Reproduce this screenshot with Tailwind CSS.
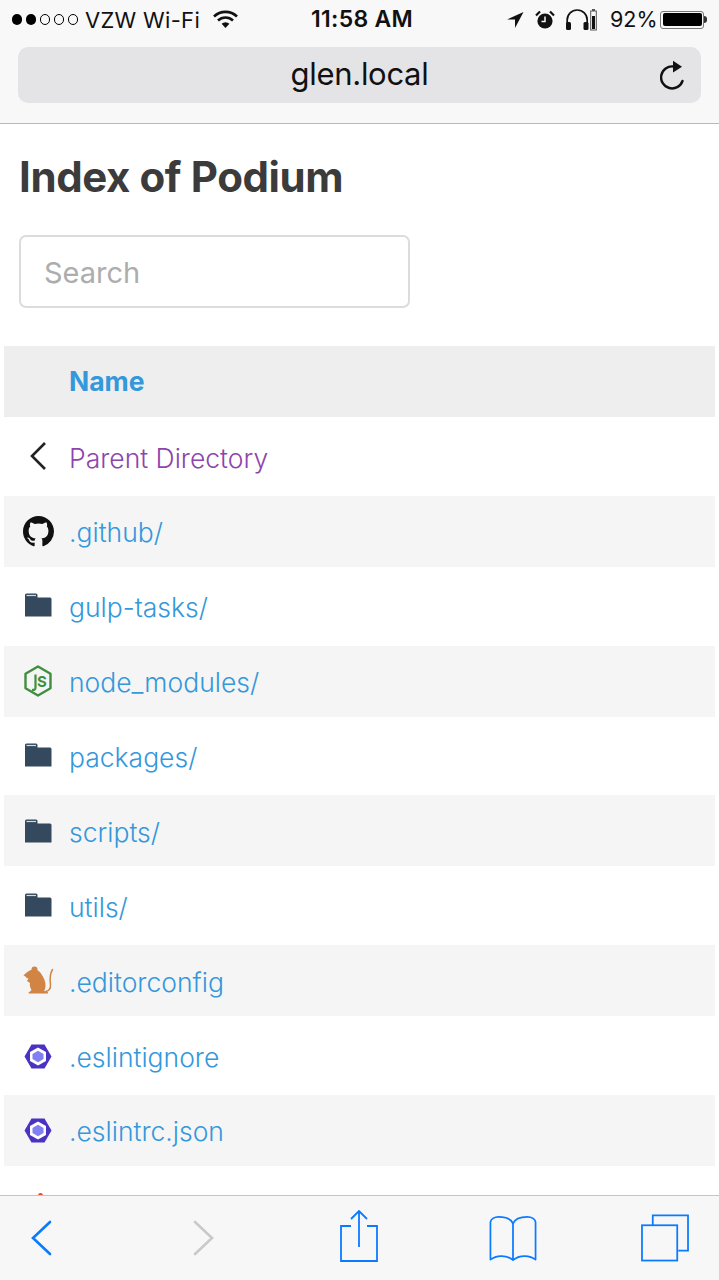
<!DOCTYPE html>
<html lang="en">
<head>
  <meta charset="UTF-8" />
  <meta name="viewport" content="width=device-width, initial-scale=1" />
  <title>Index of Podium</title>
  <script src="https://cdn.jsdelivr.net/npm/@tailwindcss/browser@4"></script>
</head>
<body class="bg-white font-['Inter','Liberation_Sans',sans-serif] overflow-hidden">
<div class="w-[719px] h-[1280px] flex flex-col overflow-hidden">

  <!-- safari top chrome -->
  <header class="h-[124px] shrink-0 bg-[#f8f8f8] border-b border-[#b9b9b9]">
    <div class="h-[39px] flex items-center text-[#111] text-[22px] leading-none">
      <div class="flex items-center gap-[3.5px] ml-[12px] w-[66px]">
        <span class="w-[10.5px] h-[10.5px] rounded-full bg-black"></span>
        <span class="w-[10.5px] h-[10.5px] rounded-full bg-black"></span>
        <span class="w-[10.5px] h-[10.5px] rounded-full border border-black"></span>
        <span class="w-[10.5px] h-[10.5px] rounded-full border border-black"></span>
        <span class="w-[10.5px] h-[10.5px] rounded-full border border-black"></span>
      </div>
      <span class="ml-[7px] w-[128px] tracking-[0.3px]">VZW Wi-Fi</span>
      <svg class="w-[25px] h-[19px]" viewBox="0 0 25 19"><path d="M1 6.5a16.5 16.5 0 0 1 23 0" fill="none" stroke="#111" stroke-width="2.6"/><path d="M5 10.5a10.8 10.8 0 0 1 15 0" fill="none" stroke="#111" stroke-width="2.6"/><path d="M8.6 13.8a5.6 5.6 0 0 1 7.8 0L12.5 18z" fill="#111"/></svg>
      <span class="ml-[73px] w-[196px] text-[23px] tracking-[0.3px] font-semibold">11:58 AM</span>
      <svg class="-ml-[1px] w-[18px] h-[18px]" viewBox="0 0 18 18"><path d="M17.5 1 1 8.5h8v8.5z" fill="#111"/></svg>
      <svg class="ml-[11px] w-[20px] h-[20px]" viewBox="0 0 20 20"><circle cx="10" cy="11" r="7.6" fill="#111"/><path d="M10 6.5V11.5H6.5" fill="none" stroke="#f8f8f8" stroke-width="1.5"/><path d="M1 5.5 5 1.5M19 5.5l-4-4" stroke="#111" stroke-width="2.2"/></svg>
      <svg class="ml-[10px] w-[25px] h-[22px]" viewBox="0 0 25 22"><path d="M2.2 15V11a10 10 0 0 1 20 0v4" fill="none" stroke="#111" stroke-width="1.7"/><rect x="1" y="13" width="5" height="8" rx="1.5" fill="#111"/><rect x="18.5" y="13" width="5" height="8" rx="1.5" fill="#111"/></svg>
      <svg class="w-[7px] h-[22px]" viewBox="0 0 7 22"><rect x="2" y="0" width="3" height="2" fill="#555"/><rect x=".7" y="2" width="5.6" height="19" fill="none" stroke="#555" stroke-width="1"/><rect x="2" y="7" width="3" height="13" fill="#111"/></svg>
      <span class="ml-[13px] w-[50px] text-[21.5px]">92%</span>
      <div class="flex items-center">
        <div class="w-[44px] h-[18px] rounded-[3px] border border-[#777] p-[1.5px]"><div class="h-full bg-black rounded-[2px]"></div></div>
        <div class="w-[3px] h-[7px] bg-[#333] rounded-r-full"></div>
      </div>
    </div>
    <div class="mx-[18px] mt-[8px] h-[56px] rounded-[10px] bg-[#e4e4e6] flex items-center">
      <span class="flex-1 pl-[41px] text-center text-[31px] leading-none text-[#111] tracking-[-0.3px] pb-[3px]">glen.local</span>
      <svg class="w-[28px] h-[30px] mr-[13px]" viewBox="0 0 28 30"><path d="M22.5 21a11 11 0 1 1-9-14.5" fill="none" stroke="#111" stroke-width="2.4" stroke-linecap="round"/><path d="M13 .8 22 6.800 13 12.500z" fill="#111"/></svg>
    </div>
  </header>

  <!-- listing -->
  <main class="flex-1 overflow-hidden">
    <h1 class="ml-[19px] mt-[27px] h-[52px] text-[42px] leading-[52px] font-bold text-[#3b3b3b] tracking-[-0.4px]">Index of Podium</h1>
    <input class="block ml-[19px] mt-[32px] w-[391px] h-[73px] rounded-[7px] border-2 border-[#dcdcdc] px-[23px] pt-[2px] text-[29px] bg-white placeholder:text-[#adadad]" placeholder="Search" />

    <div class="mx-[4px] mt-[38px]">
      <div class="h-[71px] bg-[#eeeeee] flex items-center pl-[65px] text-[26.5px] font-bold text-[#3498db]">Name</div>

      <div class="h-[78.75px] flex items-center text-[26.5px] font-light text-[#8e44ad]">
        <div class="w-[65px] flex justify-center pl-[5px]"><svg class="w-[20px] h-[30px]" viewBox="0 0 20 30"><path d="M16 2 3 15l13 13" fill="none" stroke="#222" stroke-width="2.6"/></svg></div>
        <span class="pt-[5px]">Parent Directory</span>
      </div>

      <div class="h-[71px] bg-[#f5f5f5] flex items-center text-[26.5px] font-light text-[#3498db]">
        <div class="w-[65px] flex justify-center pl-[3px]"><svg class="w-[31px] h-[31px]" viewBox="0 0 16 16"><path fill="#111" d="M8 0C3.58 0 0 3.58 0 8c0 3.54 2.29 6.53 5.47 7.59.4.07.55-.17.55-.38 0-.19-.01-.82-.01-1.49-2.01.37-2.53-.49-2.69-.94-.09-.23-.48-.94-.82-1.13-.28-.15-.68-.52-.01-.53.63-.01 1.08.58 1.23.82.72 1.21 1.87.87 2.33.66.07-.52.28-.87.51-1.07-1.78-.2-3.64-.89-3.64-3.95 0-.87.31-1.59.82-2.15-.08-.2-.36-1.02.08-2.12 0 0 .67-.21 2.2.82.64-.18 1.32-.27 2-.27.68 0 1.36.09 2 .27 1.53-1.04 2.2-.82 2.2-.82.44 1.1.16 1.92.08 2.12.51.56.82 1.27.82 2.15 0 3.07-1.87 3.75-3.65 3.95.29.25.54.73.54 1.48 0 1.07-.01 1.93-.01 2.2 0 .21.15.46.55.38A8.013 8.013 0 0016 8c0-4.42-3.58-8-8-8z"/></svg></div>
        <span class="pt-[4px]">.github/</span>
      </div>

      <div class="h-[78.75px] flex items-center text-[26.5px] font-light text-[#3498db]">
        <div class="w-[65px] flex justify-center pl-[3px] pb-[2px]"><svg class="w-[28px] h-[24px]" viewBox="0 0 28 24"><path fill="#34495e" d="M1 2Q1 .5 2.500 .5H12q1.500 0 1.500 1.500V4.500H26q1.500 0 1.500 1.500V23.500H1z"/><path d="M2.500 2.500h9.500" stroke="#d5dade" stroke-width="1.200"/></svg></div>
        <span class="pt-[3px]">gulp-tasks/</span>
      </div>

      <div class="h-[71px] bg-[#f5f5f5] flex items-center text-[26.5px] font-light text-[#3498db]">
        <div class="w-[65px] flex justify-center pl-[3px]"><svg class="w-[28px] h-[32px]" viewBox="0 0 28 32"><path d="M14 1.500 26.500 8.700v14.600L14 30.500 1.500 23.300V8.700z" fill="none" stroke="#3f8f3f" stroke-width="2.400" stroke-linejoin="round"/><path d="M11.500 9.500v13q0 3-3.500 2.300" fill="none" stroke="#3f8f3f" stroke-width="2.200"/><text x="13" y="21.500" font-family="Inter" font-size="15" font-weight="700" fill="#3f8f3f">S</text></svg></div>
        <span class="pt-[3px]">node_modules/</span>
      </div>

      <div class="h-[78.75px] flex items-center text-[26.5px] font-light text-[#3498db]">
        <div class="w-[65px] flex justify-center pl-[3px] pb-[2px]"><svg class="w-[28px] h-[24px]" viewBox="0 0 28 24"><path fill="#34495e" d="M1 2Q1 .5 2.500 .5H12q1.500 0 1.500 1.500V4.500H26q1.500 0 1.500 1.500V23.500H1z"/><path d="M2.500 2.500h9.500" stroke="#d5dade" stroke-width="1.200"/></svg></div>
        <span class="pt-[3px]">packages/</span>
      </div>

      <div class="h-[71px] bg-[#f5f5f5] flex items-center text-[26.5px] font-light text-[#3498db]">
        <div class="w-[65px] flex justify-center pl-[3px]"><svg class="w-[28px] h-[24px]" viewBox="0 0 28 24"><path fill="#34495e" d="M1 2Q1 .5 2.500 .5H12q1.500 0 1.500 1.500V4.500H26q1.500 0 1.500 1.500V23.500H1z"/><path d="M2.500 2.500h9.500" stroke="#d5dade" stroke-width="1.200"/></svg></div>
        <span class="pt-[4px]">scripts/</span>
      </div>

      <div class="h-[78.75px] flex items-center text-[26.5px] font-light text-[#3498db]">
        <div class="w-[65px] flex justify-center pl-[3px] pb-[2px]"><svg class="w-[28px] h-[24px]" viewBox="0 0 28 24"><path fill="#34495e" d="M1 2Q1 .5 2.500 .5H12q1.500 0 1.500 1.500V4.500H26q1.500 0 1.500 1.500V23.500H1z"/><path d="M2.500 2.500h9.500" stroke="#d5dade" stroke-width="1.200"/></svg></div>
        <span class="pt-[4px]">utils/</span>
      </div>

      <div class="h-[71px] bg-[#f5f5f5] flex items-center text-[26.5px] font-light text-[#3498db]">
        <div class="w-[65px] flex justify-center pl-[3px]"><svg class="w-[31px] h-[29px]" viewBox="0 0 31 29"><circle cx="11.500" cy="3.500" r="3" fill="#d28445"/><path fill="#d28445" d="M.5 9.500C3 7 6 4 10 3.500c3-.5 6 1 8 4 3 4 5 9 4.500 13-.2 2-.8 3.500-1.500 4.500l3 .7c1 .3 1.200 1 1 1.800H6c-.8-.7-.5-1.500.8-1.800L8.500 24C7 21.500 6.500 19 7 17l-3-2 1.500-2.500c-1.500 0-2.500-.7-3-2z"/><path d="M22.500 25.500c3-.3 5.500-2.500 5-7-.5-4.500-1.500-9 2-15" fill="none" stroke="#d28445" stroke-width="1.500" stroke-linecap="round"/></svg></div>
        <span class="pt-[4px]">.editorconfig</span>
      </div>

      <div class="h-[78.75px] flex items-center text-[26.5px] font-light text-[#3498db]">
        <div class="w-[65px] flex justify-center pl-[3px] pt-[2px]"><svg class="w-[28px] h-[25px]" viewBox="0 0 28 25"><path fill="#4b32c3" d="M7.500.5h13L27.500 12.500 20.500 24.500h-13L.5 12.500z"/><path fill="#fff" d="M14 3.500 22 8v9l-8 4.500L6 17V8z"/><path fill="#8080f2" d="M14 6.700 19.500 9.900v5.200L14 18.300 8.500 15.100V9.900z"/></svg></div>
        <span class="pt-[4px]">.eslintignore</span>
      </div>

      <div class="h-[71px] bg-[#f5f5f5] flex items-center text-[26.5px] font-light text-[#3498db]">
        <div class="w-[65px] flex justify-center pl-[3px]"><svg class="w-[28px] h-[25px]" viewBox="0 0 28 25"><path fill="#4b32c3" d="M7.500.5h13L27.500 12.500 20.500 24.500h-13L.5 12.500z"/><path fill="#fff" d="M14 3.500 22 8v9l-8 4.500L6 17V8z"/><path fill="#8080f2" d="M14 6.700 19.500 9.900v5.200L14 18.300 8.500 15.100V9.900z"/></svg></div>
        <span class="pt-[4px]">.eslintrc.json</span>
      </div>

      <!-- next row is cut off by the toolbar, only the icon tip shows -->
      <div class="h-[79px] pt-[27px] pl-[34px]"><div class="w-[5px] h-[4px] rounded-t-full bg-[#e0512b]"></div></div>
    </div>
  </main>

  <!-- safari bottom toolbar -->
  <footer class="h-[85px] shrink-0 bg-[#f7f7f8] border-t border-[#c4c4c4] flex items-start">
    <svg class="ml-[31px] mt-[24px] w-[21px] h-[36px]" viewBox="0 0 21 36"><path d="M19 2 2 18l17 16" fill="none" stroke="#0a7aff" stroke-width="2.600" stroke-linecap="round"/></svg>
    <svg class="ml-[141px] mt-[24px] w-[21px] h-[36px]" viewBox="0 0 21 36"><path d="M2 2l17 16L2 34" fill="none" stroke="#c9c9c9" stroke-width="2.600" stroke-linecap="round"/></svg>
    <svg class="ml-[126px] mt-[14px] w-[38px] h-[52px]" viewBox="0 0 38 52"><path d="M11 16H1v35h36V16H27" fill="none" stroke="#0a7aff" stroke-width="1.800"/><path d="M19 37V2M11 9l8-8 8 8" fill="none" stroke="#0a7aff" stroke-width="1.800"/></svg>
    <svg class="ml-[111px] mt-[19px] w-[48px] h-[47px]" viewBox="0 0 50 47"><path d="M25 8C23 3 16 1 10 1 6 1 2 3 1.500 6.500v39C7 41 18 40 25 46c7-6 18-5 23.500-.5v-39C48 3 44 1 40 1c-6 0-13 2-15 7zM25 8v37" fill="none" stroke="#0a7aff" stroke-width="1.800" stroke-linejoin="round"/></svg>
    <svg class="ml-[104px] mt-[18px] w-[48px] h-[48px]" viewBox="0 0 49 48"><path d="M12 11V1h36v36H38" fill="none" stroke="#0a7aff" stroke-width="1.800"/><rect x="1" y="11" width="36" height="36" fill="none" stroke="#0a7aff" stroke-width="1.800"/></svg>
  </footer>
</div>
</body>
</html>
